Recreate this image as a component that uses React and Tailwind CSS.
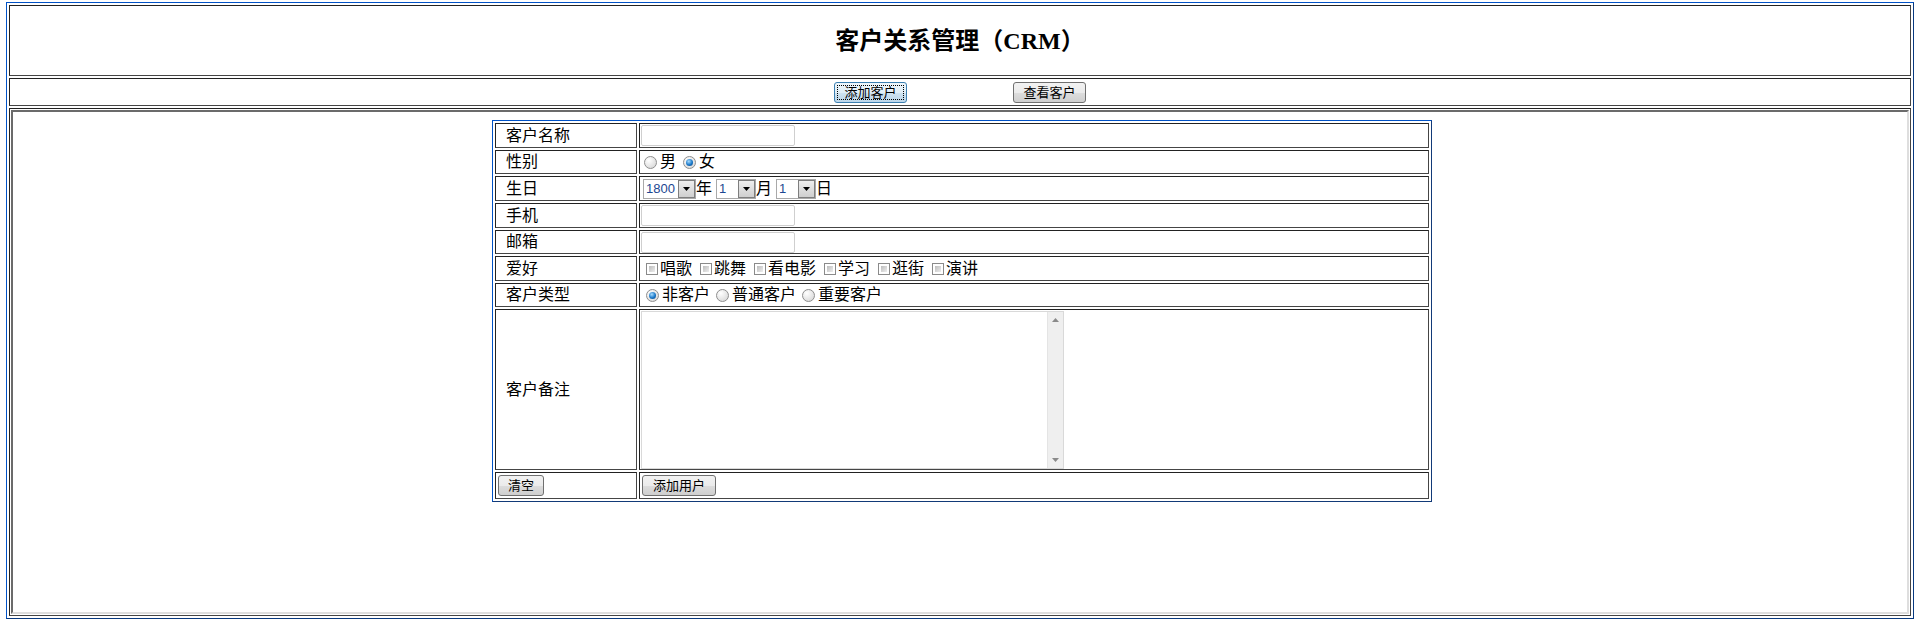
import clsx from 'clsx'

const cell = 'border border-[#222] border-r-[#454545] border-b-[#454545]'

const rows = [
  { label: '客户名称', h: 'h-[25px]', kind: 'text' },
  { label: '性别', h: 'h-[24px]', kind: 'gender' },
  { label: '生日', h: 'h-[25px]', kind: 'birthday' },
  { label: '手机', h: 'h-[25px]', kind: 'text' },
  { label: '邮箱', h: 'h-[24px]', kind: 'text' },
  { label: '爱好', h: 'h-[25px]', kind: 'hobby' },
  { label: '客户类型', h: 'h-[24px]', kind: 'type' },
]

const hobbies = ['唱歌', '跳舞', '看电影', '学习', '逛街', '演讲']
const types = [['非客户', true], ['普通客户', false], ['重要客户', false]]

function Btn({ children, w, focus }) {
  return (
    <button
      type="button"
      className={clsx(
        'h-[21px] rounded-[3px] border text-[13px] leading-none text-black',
        w,
        focus
          ? 'border-[#3c7fb1] bg-[linear-gradient(#eef6fb_0%,#e0eef7_50%,#cfe3f1_51%,#bcd6ea_100%)] outline-1 outline-dotted outline-black outline-offset-[-4px]'
          : 'border-[#707070] bg-[linear-gradient(#f2f2f2_0%,#ebebeb_50%,#dddddd_51%,#cfcfcf_100%)]'
      )}
    >
      {children}
    </button>
  )
}

function Radio({ checked }) {
  return (
    <span className="w-[13px] h-[13px] shrink-0 rounded-full border border-[#8e8e8e] bg-[radial-gradient(circle_at_35%_30%,#ffffff,#d2d2d2)] flex items-center justify-center">
      {checked && <span className="w-[7px] h-[7px] rounded-full bg-[radial-gradient(circle_at_40%_35%,#a8dcff,#1a78c8_55%,#0a3f7c)]" />}
    </span>
  )
}

function Check() {
  return (
    <span className="w-[12px] h-[12px] shrink-0 border border-[#8a8a8a] bg-white p-[2px]">
      <span className="block w-full h-full bg-linear-to-br from-[#bdbdbd] to-[#eeeeee]" />
    </span>
  )
}

function Select({ value, w }) {
  return (
    <div className={clsx('h-[20px] flex border border-[#a9a9a9] bg-white', w)}>
      <span className="flex-1 pl-[2px] text-[13px] leading-[18px] text-[#1d4791]">{value}</span>
      <span className="w-[17px] border border-[#7e7e7e] bg-linear-to-b from-[#eeeeee] to-[#cfcfcf] flex items-center justify-center">
        <svg width="7" height="4" viewBox="0 0 7 4"><path d="M0 0h7L3.5 4z" fill="#000" /></svg>
      </span>
    </div>
  )
}

function Value({ kind }) {
  if (kind === 'text')
    return <input type="text" className="w-[154px] h-[21px] border border-[#cfcfcf] rounded-[2px] bg-white outline-none" />
  if (kind === 'gender')
    return (
      <div className="flex items-center gap-[7px] pl-[3px]">
        <span className="flex items-center gap-[3px]"><Radio />男</span>
        <span className="flex items-center gap-[3px]"><Radio checked />女</span>
      </div>
    )
  if (kind === 'birthday')
    return (
      <div className="flex items-center pl-[2px]">
        <Select value="1800" w="w-[53px]" />年
        <span className="ml-[4px]"><Select value="1" w="w-[40px]" /></span>月
        <span className="ml-[4px]"><Select value="1" w="w-[40px]" /></span>日
      </div>
    )
  if (kind === 'hobby')
    return (
      <div className="flex items-center gap-[8px] pl-[5px]">
        {hobbies.map(h => (
          <span key={h} className="flex items-center gap-[2px]"><Check />{h}</span>
        ))}
      </div>
    )
  return (
    <div className="flex items-center gap-[6px] pl-[5px]">
      {types.map(([t, c]) => (
        <span key={t} className="flex items-center gap-[3px]"><Radio checked={c} />{t}</span>
      ))}
    </div>
  )
}

export default function App() {
  return (
    <div className="bg-white min-h-[639px] pt-[2px] font-['Liberation_Sans','Noto_Sans_CJK_SC',sans-serif] text-black">
      <div className="ml-[6px] w-[1908px] h-[617px] border border-[#0052c6] border-r-[#08397f] border-b-[#08397f] p-[2px] flex flex-col gap-[2px]">
        <div className={clsx(cell, 'h-[71px] flex items-center justify-center')}>
          <h2 className="text-[24px] font-bold leading-[28px] font-['Liberation_Serif','Noto_Sans_CJK_SC',serif]">客户关系管理（CRM）</h2>
        </div>
        <div className={clsx(cell, 'h-[28px] flex items-center justify-center gap-[106px]')}>
          <Btn w="w-[73px]" focus>添加客户</Btn>
          <Btn w="w-[73px]">查看客户</Btn>
        </div>
        <div className={clsx(cell, 'h-[508px] p-[1px]')}>
          {/* iframe area */}
          <div className="h-full border-2 border-[#6b6b6b] border-r-[#dedede] border-b-[#dedede] bg-white pt-[8px] pl-[12px] pr-[8px]">
            <div className="w-[940px] mx-auto border border-[#0052c6] border-r-[#123a78] border-b-[#123a78] p-[2px] flex flex-col gap-[2px] text-[16px] leading-[18px]">
              {rows.map(r => (
                <div key={r.label} className={clsx('grid grid-cols-[142px_1fr] gap-[2px]', r.h)}>
                  <div className={clsx(cell, 'flex items-center pl-[10px]')}>{r.label}</div>
                  <div className={clsx(cell, 'flex items-center pl-[1px]')}><Value kind={r.kind} /></div>
                </div>
              ))}
              <div className="grid grid-cols-[142px_1fr] gap-[2px] h-[161px]">
                <div className={clsx(cell, 'flex items-center pl-[10px]')}>客户备注</div>
                <div className={clsx(cell, 'pt-[1px] pl-[1px]')}>
                  <div className="w-[423px] h-[158px] border border-[#d9d9d9] flex">
                    <textarea className="flex-1 resize-none outline-none bg-white" />
                    <div className="w-[16px] bg-[#efefef] border-l border-[#e4e4e4] flex flex-col items-center justify-between py-[6px]">
                      <svg width="7" height="4" viewBox="0 0 7 4"><path d="M3.5 0L7 4H0z" fill="#8a8a8a" /></svg>
                      <svg width="7" height="4" viewBox="0 0 7 4"><path d="M0 0h7L3.5 4z" fill="#8a8a8a" /></svg>
                    </div>
                  </div>
                </div>
              </div>
              <div className="grid grid-cols-[142px_1fr] gap-[2px] h-[27px]">
                <div className={clsx(cell, 'flex items-center pl-[2px]')}><Btn w="w-[46px]">清空</Btn></div>
                <div className={clsx(cell, 'flex items-center pl-[2px]')}><Btn w="w-[74px]">添加用户</Btn></div>
              </div>
            </div>
          </div>
        </div>
      </div>
    </div>
  )
}
